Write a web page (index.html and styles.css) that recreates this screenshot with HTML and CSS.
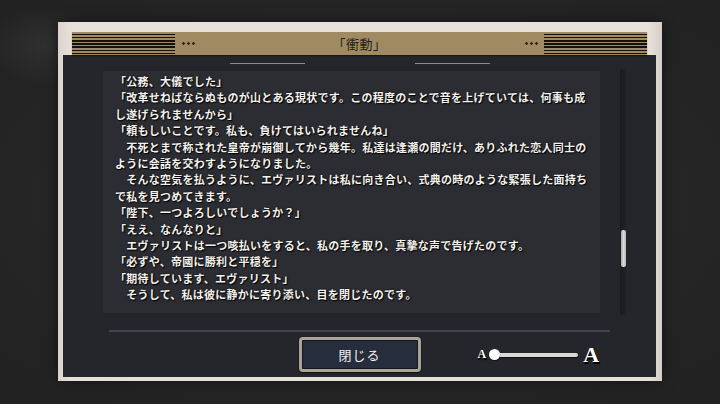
FILE: index.html
```html
<!DOCTYPE html>
<html lang="ja">
<head>
    <meta charset="UTF-8">
    <meta name="viewport" content="width=device-width, initial-scale=1.0">
    <title>バックログ</title>
    <link rel="stylesheet" href="styles.css">
</head>
<body>
    <div class="log-frame">
        <div class="log-header">
            <span class="stripes"></span>
            <span class="dots"></span>
            <h1 class="log-title">「衝動」</h1>
            <span class="dots"></span>
            <span class="stripes"></span>
        </div>

        <div class="log-panel">
            <div class="ornament">
                <span class="ornament-line"></span>
                <span class="ornament-line"></span>
            </div>

            <div class="log-body">
                <div class="log-text">
                    <p>「公務、大儀でした」</p>
                    <p>「改革せねばならぬものが山とある現状です。この程度のことで音を上げていては、何事も成<br>し遂げられませんから」</p>
                    <p>「頼もしいことです。私も、負けてはいられませんね」</p>
                    <p>　不死とまで称された皇帝が崩御してから幾年。私達は逢瀬の間だけ、ありふれた恋人同士の<br>ように会話を交わすようになりました。</p>
                    <p>　そんな空気を払うように、エヴァリストは私に向き合い、式典の時のような緊張した面持ち<br>で私を見つめてきます。</p>
                    <p>「陛下、一つよろしいでしょうか？」</p>
                    <p>「ええ、なんなりと」</p>
                    <p>　エヴァリストは一つ咳払いをすると、私の手を取り、真摯な声で告げたのです。</p>
                    <p>「必ずや、帝國に勝利と平穏を」</p>
                    <p>「期待しています、エヴァリスト」</p>
                    <p>　そうして、私は彼に静かに寄り添い、目を閉じたのです。</p>
                </div>
                <div class="scroll-track">
                    <div class="scroll-thumb"></div>
                </div>
            </div>

            <div class="separator"></div>

            <div class="log-footer">
                <span></span>
                <button class="close-btn">閉じる</button>
                <div class="font-size">
                    <span class="size-small">A</span>
                    <div class="size-track">
                        <span class="size-thumb"></span>
                    </div>
                    <span class="size-large">A</span>
                </div>
            </div>
        </div>
    </div>
</body>
</html>
```

FILE: styles.css
```css
* {
    margin: 0;
    padding: 0;
    box-sizing: border-box;
}

body {
    width: 720px;
    height: 404px;
    overflow: hidden;
    background:
        radial-gradient(ellipse 60px 40px at 45px 45px, rgba(255, 255, 255, 0.06), transparent),
        radial-gradient(ellipse 500px 260px at 360px 200px, #2c2c2c, #222);
    font-family: "Noto Sans CJK JP", sans-serif;
    padding: 22px 0 0 58px;
}

.log-frame {
    width: 604px;
    height: 359px;
    background: linear-gradient(90deg, #d9d3cb, #e6e0d9 2%, #e6e0d9 98%, #d4cec6);
    padding: 10px 6px 4px 5px;
    display: flex;
    flex-direction: column;
    box-shadow: 0 0 12px rgba(0, 0, 0, 0.5);
}

/* header bar */
.log-header {
    height: 23px;
    margin: 0 9px;
    background: #a08a62;
    display: flex;
    align-items: center;
    position: relative;
    z-index: 1;
    box-shadow: 0 1px 1px rgba(0, 0, 0, 0.4);
}

.stripes {
    width: 103px;
    height: 23px;
    background: repeating-linear-gradient(180deg,
        #a08a62 0, #a08a62 1.5px,
        #15120e 1.5px, #15120e 3.2px);
}

.dots {
    width: 14px;
    height: 3px;
    margin: 0 6px;
    background: radial-gradient(circle, #2b251d 1.1px, transparent 1.5px) 0 0 / 5px 3px repeat-x;
}

.log-title {
    flex: 1;
    text-align: center;
    font-size: 13px;
    font-weight: 400;
    color: #241f18;
    letter-spacing: 0.5px;
}

/* dark panel */
.log-panel {
    flex: 1;
    background: #25262b;
    display: flex;
    flex-direction: column;
}

.ornament {
    height: 16px;
    padding-top: 8px;
    display: flex;
    justify-content: center;
    gap: 110px;
}

.ornament-line {
    width: 75px;
    height: 1px;
    background: #8a8b8d;
}

.log-body {
    display: flex;
    gap: 20px;
    padding-left: 40px;
    height: 242px;
}

.log-text {
    width: 497px;
    background: #2c2d32;
    padding: 2px 10px 0 12px;
    color: #f4f2ee;
    font-size: 11px;
    font-weight: 700;
    line-height: 16.4px;
    letter-spacing: 0.25px;
    white-space: nowrap;
    text-shadow: 1px 1px 1px #000, 0 0 2px rgba(0, 0, 0, 0.8);
}

.scroll-track {
    width: 6px;
    margin: -2px 0 -2px 0;
    background: linear-gradient(90deg, #1a1b1e, #202125);
    border-radius: 2px;
    padding-top: 161px;
}

.scroll-thumb {
    height: 37px;
    margin: 0 0.5px;
    background: linear-gradient(90deg, #a9a9a9, #d8d8d8 50%, #b5b5b5);
    border-radius: 2px;
}

.separator {
    margin: 17px 0 0 46px;
    width: 501px;
    height: 2px;
    background: #42464c;
}

/* footer */
.log-footer {
    margin-top: 5px;
    display: grid;
    grid-template-columns: 1fr auto 1fr;
    align-items: center;
}

.close-btn {
    width: 122px;
    height: 35px;
    background: #262d3c;
    border: 3px solid #aaa497;
    border-radius: 4px;
    box-shadow: inset 0 0 0 1px #151820, 0 1px 2px rgba(0, 0, 0, 0.6);
    color: #f2f2f2;
    font-family: "Noto Sans CJK JP", sans-serif;
    font-size: 13px;
    letter-spacing: 1px;
}

.font-size {
    display: flex;
    align-items: center;
    margin-left: 57px;
    font-family: "Liberation Serif", "DejaVu Serif", serif;
    font-weight: 700;
    color: #fff;
    text-shadow: 1px 1px 0 #000, 1px 2px 1px #000;
}

.size-small {
    font-size: 12px;
    margin-right: 8px;
}

.size-track {
    width: 84px;
    height: 4px;
    background: #d9d9d9;
    border-radius: 2px;
    position: relative;
    box-shadow: 0 1px 1px rgba(0, 0, 0, 0.6);
}

.size-thumb {
    position: absolute;
    left: -5px;
    top: -3.5px;
    width: 11px;
    height: 11px;
    border-radius: 50%;
    background: #fff;
    box-shadow: 0 1px 1px rgba(0, 0, 0, 0.6);
}

.size-large {
    font-size: 22px;
    margin-left: 5px;
}
```
